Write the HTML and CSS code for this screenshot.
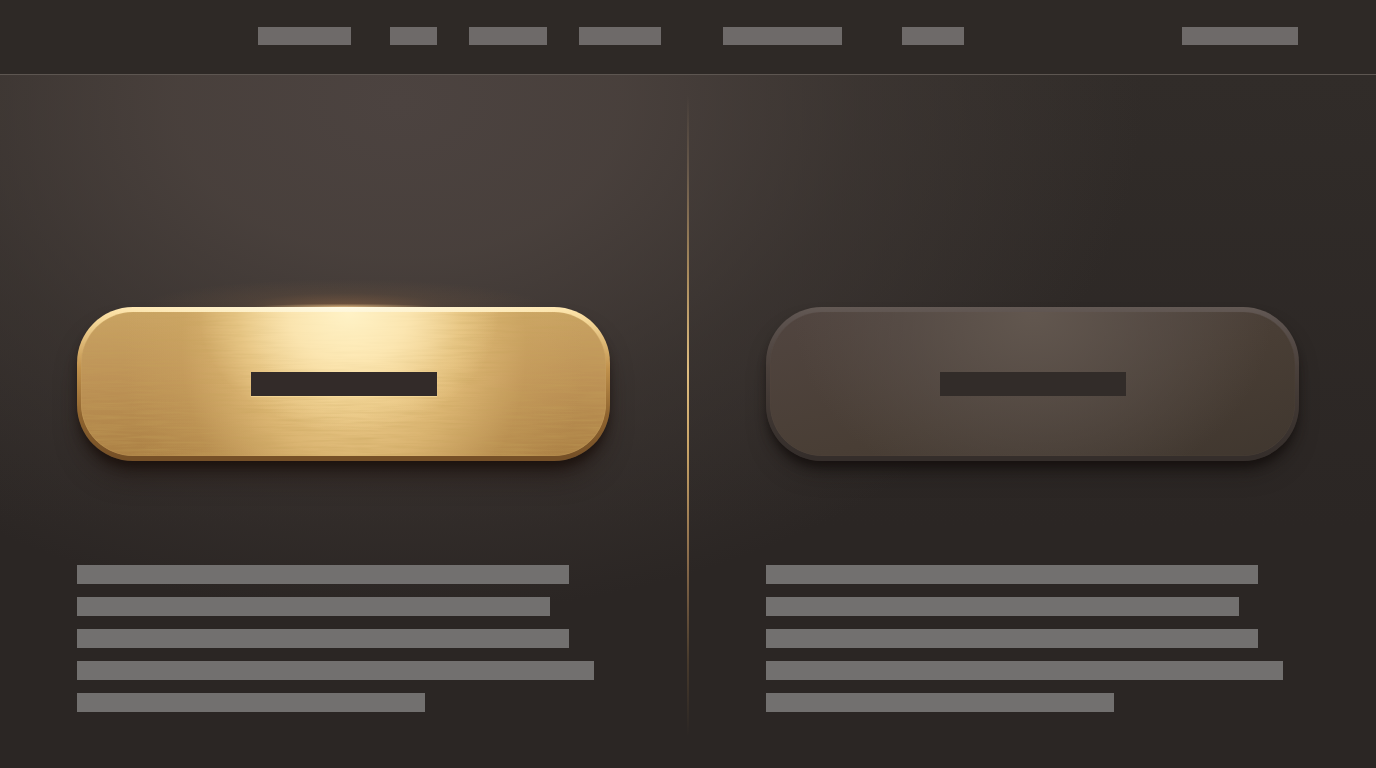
FILE: index.html
```
<!DOCTYPE html>
<html lang="en">
<head>
    <meta charset="UTF-8">
    <meta name="viewport" content="width=device-width, initial-scale=1.0">
    <link rel="stylesheet" href="styles.css">
    <title>Buttons</title>
</head>
<body>
    <header class="top">
        <nav class="nav">
            <a href="#" class="nav-item w-large" aria-label="Home"></a>
            <a href="#" class="nav-item w-tiny" aria-label="Shop"></a>
            <a href="#" class="nav-item w-medium" aria-label="Products"></a>
            <a href="#" class="nav-item w-regular" aria-label="Services"></a>
            <a href="#" class="nav-item w-wide" aria-label="Collections"></a>
            <a href="#" class="nav-item w-small" aria-label="About"></a>
        </nav>
        <a href="#" class="nav-item w-account" aria-label="Account"></a>
    </header>

    <main class="main-container">
        <section class="panel">
            <button class="plate gold" type="button" aria-label="Active">
                <span class="face">
                    <svg class="brushed" aria-hidden="true">
                        <filter id="brush" x="0" y="0" width="100%" height="100%">
                            <feTurbulence type="fractalNoise" baseFrequency="0.02 0.4" numOctaves="3" seed="8"/>
                            <feColorMatrix type="matrix" values="0 0 0 0 0.55  0 0 0 0 0.36  0 0 0 0 0.1  0.7 0 0 0 -0.26"/>
                        </filter>
                        <rect width="100%" height="100%" filter="url(#brush)"/>
                    </svg>
                    <span class="shine"></span>
                    <span class="label"></span>
                </span>
            </button>
            <div class="lines">
                <div class="line long"></div>
                <div class="line mid"></div>
                <div class="line long"></div>
                <div class="line full"></div>
                <div class="line short"></div>
            </div>
        </section>
        <div class="divider"></div>
        <section class="panel">
            <button class="plate dark" type="button" aria-label="Inactive">
                <span class="face">
                    <span class="label"></span>
                </span>
            </button>
            <div class="lines">
                <div class="line long"></div>
                <div class="line mid"></div>
                <div class="line long"></div>
                <div class="line full"></div>
                <div class="line short"></div>
            </div>
        </section>
    </main>
</body>
</html>
```
FILE: styles.css
```
* {
    box-sizing: border-box;
}

body {
    font-family: 'Roboto', sans-serif;
    background-color: #2c2725;
    margin: 0;
    min-height: 100vh;
    display: flex;
    flex-direction: column;
}

.top {
    display: flex;
    justify-content: space-between;
    padding: 27px 78px 29px 258px;
    background-color: #2e2926;
    border-bottom: 1px solid #5d5651;
}

.nav {
    display: flex;
    gap: 32px;
}

.nav-item {
    height: 18px;
    background-color: #6e6a69;
}

.w-large {
    width: 93px;
    margin-right: 7px;
}

.w-tiny {
    width: 47px;
}

.w-medium {
    width: 78px;
}

.w-regular {
    width: 82px;
    margin-right: 30px;
}

.w-wide {
    width: 119px;
    margin-right: 28px;
}

.w-small {
    width: 62px;
}

.w-account {
    width: 116px;
}

.main-container {
    flex-grow: 1;
    display: grid;
    grid-template-columns: 1fr 2px 1fr;
    background:
        radial-gradient(ellipse 54% 74% at 29% 4%, #4c4340 0%, rgba(75, 66, 62, 0.9) 30%, rgba(69, 61, 57, 0.5) 62%, rgba(46, 41, 38, 0) 100%),
        linear-gradient(#312c29, #2b2624 65%, #2b2624);
}

.panel {
    padding: 232px 77px 56px;
}

.divider {
    margin: 20px 0 32px;
    background: linear-gradient(rgba(150, 125, 90, 0), #68594b 12%, #a98b5d 28%, #dfbd80 43%, #c9a467 55%, #87694a 73%, rgba(100, 78, 52, 0.5) 88%, rgba(100, 78, 52, 0));
}

.plate {
    display: block;
    width: 100%;
    height: 154px;
    padding: 5px 4px;
    border: none;
    border-radius: 56px;
    cursor: pointer;
    position: relative;
}

.face {
    display: flex;
    align-items: center;
    justify-content: center;
    height: 100%;
    border-radius: 52px;
    position: relative;
    overflow: hidden;
}

.gold {
    background:
        radial-gradient(ellipse 240px 24px at 50% 0, #fffbe5, rgba(255, 239, 188, 0)),
        linear-gradient(#ffe6ae 0, #f3d595 10%, #c0914c 40%, #8f642f 70%, #765027 97%);
    box-shadow: 0 8px 10px -2px rgba(24, 14, 10, 0.7), 0 20px 28px -8px rgba(30, 18, 14, 0.65);
}

/* warm light spilling over the top edge */
.gold::before {
    content: "";
    position: absolute;
    left: 12%;
    right: 12%;
    top: -28px;
    height: 28px;
    background:
        radial-gradient(ellipse 22% 12% at 50% 100%, rgba(255, 215, 150, 0.7), rgba(220, 150, 90, 0)),
        radial-gradient(ellipse 50% 100% at 50% 100%, rgba(160, 110, 70, 0.5), rgba(130, 95, 65, 0.18) 50%, rgba(120, 90, 60, 0));
}

.gold .face {
    background:
        radial-gradient(ellipse 230px 260px at 52% 25%, #f8da9a, rgba(236, 200, 130, 0.7) 45%, rgba(215, 175, 105, 0.25) 75%, rgba(205, 165, 95, 0)),
        linear-gradient(#c9a363, #be9357 45%, #ac8145);
    box-shadow: inset 0 0 1px rgba(255, 222, 150, 0.6);
}

.brushed,
.shine {
    position: absolute;
    left: 0;
    top: 0;
    width: 100%;
    height: 100%;
}

.shine {
    background: radial-gradient(ellipse 150px 120px at 51% 0, #fff2c6 0, rgba(255, 236, 186, 0.8) 40%, rgba(252, 228, 168, 0.3) 75%, rgba(250, 224, 160, 0) 100%);
}

.label {
    width: 186px;
    height: 24px;
    position: relative;
}

.gold .label {
    background-color: #332b29;
    box-shadow: 0 1px 1px rgba(255, 232, 170, 0.5);
}

.dark {
    background: linear-gradient(#635954 0, #5c524e 8%, #4a403b 40%, #3c3430 75%, #352e2b 97%);
    box-shadow: 0 8px 10px -2px rgba(18, 13, 12, 0.7), 0 16px 24px -8px rgba(20, 15, 14, 0.5);
}

.dark .face {
    background:
        radial-gradient(ellipse 240px 190px at 50% 0, #62574f, rgba(92, 82, 76, 0.55) 55%, rgba(80, 71, 65, 0)),
        linear-gradient(165deg, #514540, #493e35 55%, #40372f);
    box-shadow: inset 0 0 1px rgba(120, 106, 95, 0.5);
}

.dark .label {
    background-color: #322c29;
}

.lines {
    display: flex;
    flex-direction: column;
    gap: 13px;
    margin-top: 104px;
}

.line {
    height: 19px;
    background-color: #72706f;
}

.line.long {
    width: 92.4%;
}

.line.mid {
    width: 88.7%;
}

.line.full {
    width: 97%;
}

.line.short {
    width: 65.3%;
}
```
